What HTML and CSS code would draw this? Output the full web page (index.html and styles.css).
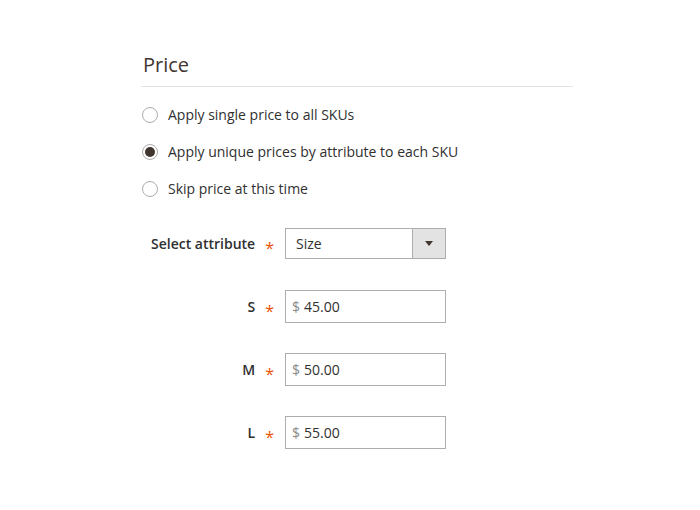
FILE: index.html
```html
<!DOCTYPE html>
<html>
<head>
<meta charset="utf-8">
<link rel="stylesheet" href="styles.css">
</head>
<body>
<section class="price-section">
  <h2 class="title">Price</h2>
  <div class="choices">
    <label class="choice"><input type="radio" name="p" class="radio"><span>Apply single price to all SKUs</span></label>
    <label class="choice"><input type="radio" name="p" class="radio" checked><span>Apply unique prices by attribute to each SKU</span></label>
    <label class="choice"><input type="radio" name="p" class="radio"><span>Skip price at this time</span></label>
  </div>
  <div class="fields">
    <div class="field">
      <div class="field-label"><span>Select attribute</span><span class="req">*</span></div>
      <div class="select">
        <span class="select-value">Size</span>
        <span class="select-btn"><span class="tri"></span></span>
      </div>
    </div>
    <div class="field">
      <div class="field-label"><span>S</span><span class="req">*</span></div>
      <div class="input"><span class="cur">$</span><span class="val">45.00</span></div>
    </div>
    <div class="field">
      <div class="field-label"><span>M</span><span class="req">*</span></div>
      <div class="input"><span class="cur">$</span><span class="val">50.00</span></div>
    </div>
    <div class="field">
      <div class="field-label"><span>L</span><span class="req">*</span></div>
      <div class="input"><span class="cur">$</span><span class="val">55.00</span></div>
    </div>
  </div>
</section>
</body>
</html>
```
FILE: styles.css
```css
html, body {
  margin: 0;
  padding: 0;
  background: #ffffff;
}
body {
  font-family: "Open Sans", "Noto Sans", sans-serif;
  font-size: 14px;
  color: #303030;
}
.price-section {
  margin-left: 141px;
  width: 432px;
  padding-top: 53px;
}
.title {
  margin: 0;
  font-size: 20px;
  font-weight: 400;
  line-height: 24px;
  color: #41362f;
  padding: 0 0 9px 2px;
  border-bottom: 1px solid #e3e3e3;
}
.choices {
  margin-top: 18px;
  display: flex;
  flex-direction: column;
  gap: 17px;
}
.choice {
  display: flex;
  align-items: center;
  line-height: 20px;
  height: 20px;
}
.radio {
  -webkit-appearance: none;
  appearance: none;
  margin: 0 10px 0 1px;
  width: 16px;
  height: 16px;
  border: 1px solid #adadad;
  border-radius: 50%;
  box-sizing: border-box;
  background: #fff;
  display: flex;
  align-items: center;
  justify-content: center;
}
.radio:checked::after {
  content: "";
  width: 10px;
  height: 10px;
  border-radius: 50%;
  background: #41362f;
}
.fields {
  margin-top: 29px;
  display: flex;
  flex-direction: column;
  gap: 31px;
}
.fields .field + .field + .field {
  margin-top: -1px;
}
.field {
  display: flex;
  align-items: center;
}
.field-label {
  width: 144px;
  box-sizing: border-box;
  padding-right: 11px;
  display: flex;
  justify-content: flex-end;
  align-items: center;
  font-weight: 600;
  line-height: 20px;
  color: #303030;
}
.req {
  color: #eb5202;
  font-size: 16px;
  font-weight: 400;
  line-height: 16px;
  margin-left: 10px;
  padding-top: 8px;
}
.select {
  width: 161px;
  height: 31px;
  box-sizing: border-box;
  border: 1px solid #adadad;
  display: flex;
  align-items: stretch;
  background: #fff;
}
.select-value {
  flex: 1;
  padding-left: 10px;
  line-height: 29px;
}
.select-btn {
  width: 32px;
  background: #e3e3e3;
  border-left: 1px solid #adadad;
  display: flex;
  align-items: center;
  justify-content: center;
}
.tri {
  width: 0;
  height: 0;
  border-left: 4px solid transparent;
  border-right: 4px solid transparent;
  border-top: 5px solid #41362f;
}
.input {
  width: 161px;
  height: 33px;
  box-sizing: border-box;
  border: 1px solid #adadad;
  display: flex;
  align-items: center;
  padding-left: 6px;
  line-height: 20px;
}
.cur {
  color: #8a8a8a;
  margin-right: 4px;
}
.val {
  color: #303030;
}
```
